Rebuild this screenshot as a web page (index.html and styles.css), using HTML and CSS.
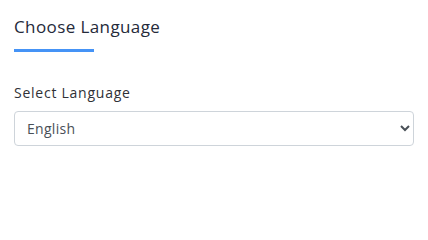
FILE: index.html
```html
<!DOCTYPE html>
<html lang="en">
<head>
<meta charset="utf-8">
<title>Choose Language</title>
<link rel="stylesheet" href="styles.css">
</head>
<body>
<div class="panel">
  <div class="head">
    <h2 class="title">Choose Language</h2>
    <div class="bar"></div>
  </div>
  <div class="field">
    <label class="label" for="lang">Select Language</label>
    <select id="lang" class="select">
      <option>English</option>
    </select>
  </div>
</div>
</body>
</html>
```
FILE: styles.css
```css
html, body { margin: 0; padding: 0; background: #fff; }
body { font-family: "Open Sans", "DejaVu Sans", sans-serif; color: #212529; }
.panel { padding: 15px 14px 0 14px; width: 400px; }
.head { display: flex; flex-direction: column; }
.title { margin: 0; font-size: 17px; font-weight: 400; line-height: 24px; color: #252a3a; letter-spacing: 0.4px; }
.bar { width: 80px; height: 3px; background: #4593f6; margin-top: 10px; }
.field { display: flex; flex-direction: column; margin-top: 31px; }
.label { font-size: 14px; line-height: 20px; color: #2f3136; margin-bottom: 8px; letter-spacing: 0.75px; }
.select { height: 35px; width: 400px; border: 1px solid #ced4da; border-radius: 4px; background: #fff; font-family: inherit; font-size: 14px; color: #495057; padding: 0 8px; letter-spacing: 0.3px; }
```
